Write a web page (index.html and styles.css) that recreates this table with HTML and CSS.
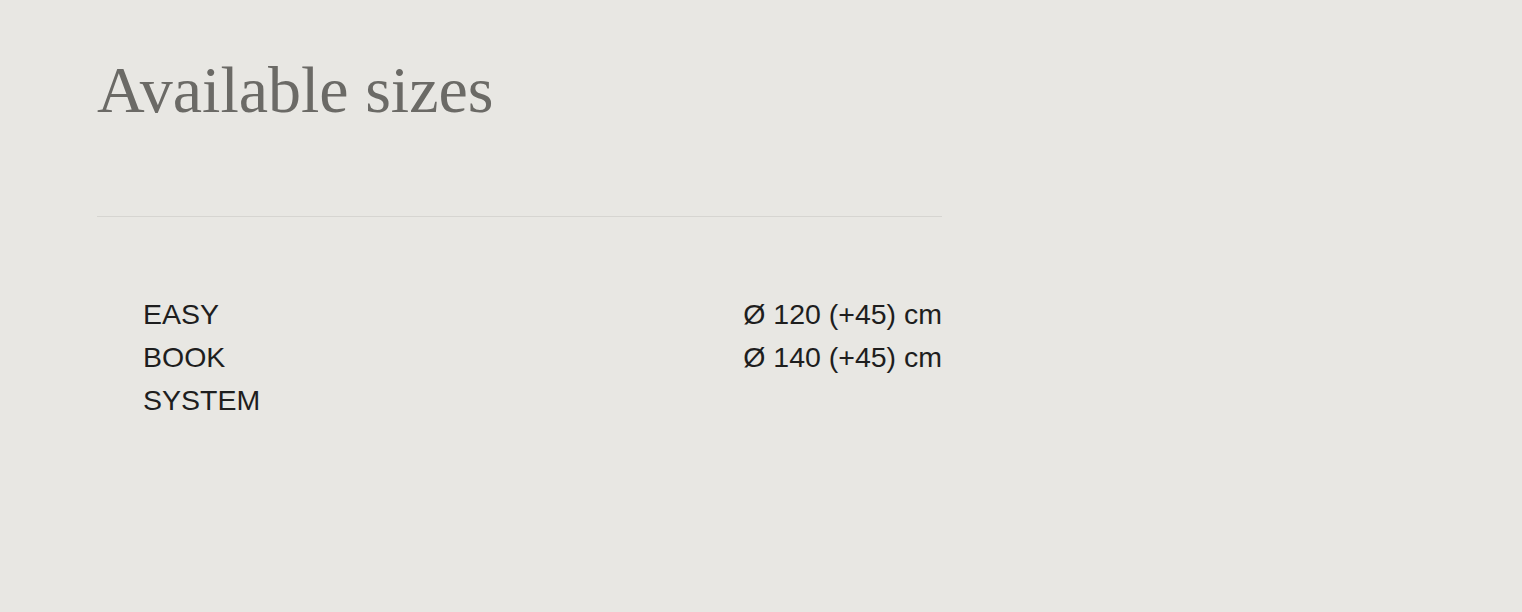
FILE: index.html
```html
<!DOCTYPE html>
<html lang="en">
<head>
<meta charset="utf-8">
<title>Available sizes</title>
<link rel="stylesheet" href="styles.css">
</head>
<body>
<main class="page">
  <h1 class="title">Available sizes</h1>
  <hr class="divider">
  <div class="sizes">
    <div class="name">EASY</div><div class="value">Ø 120 (+45) cm</div>
    <div class="name">BOOK</div><div class="value">Ø 140 (+45) cm</div>
    <div class="name">SYSTEM</div><div class="value"></div>
  </div>
</main>
</body>
</html>
```

FILE: styles.css
```css
html, body {
  margin: 0;
  padding: 0;
  background: #e8e7e3;
}
.page {
  width: 845px;
  padding: 48px 0 0 97px;
}
.title {
  margin: 0;
  font-family: "Liberation Serif", "Times New Roman", serif;
  font-weight: normal;
  font-size: 66px;
  line-height: 84px;
  color: #6b6a66;
}
.divider {
  margin: 84px 0 0;
  border: 0;
  border-top: 1px solid #d6d5d1;
  height: 0;
}
.sizes {
  margin-top: 76px;
  padding-left: 46px;
  display: grid;
  grid-template-columns: 1fr auto;
  font-family: "Liberation Sans", Arial, sans-serif;
  font-size: 28.5px;
  line-height: 43px;
  color: #1e1e1e;
}
.value {
  text-align: right;
}
```
